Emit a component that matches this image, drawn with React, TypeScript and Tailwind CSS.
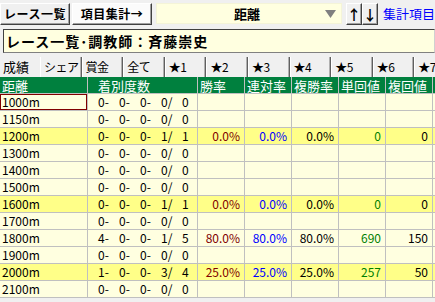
const rows = [
  { d: "1000m", c: ["0-", "0-", "0-", "0/", "0"], hl: false, sel: true, v: ["", "", "", "", ""] },
  { d: "1150m", c: ["0-", "0-", "0-", "0/", "0"], hl: false, v: ["", "", "", "", ""] },
  { d: "1200m", c: ["0-", "0-", "0-", "1/", "1"], hl: true, v: ["0.0%", "0.0%", "0.0%", "0", "0"] },
  { d: "1300m", c: ["0-", "0-", "0-", "0/", "0"], hl: false, v: ["", "", "", "", ""] },
  { d: "1400m", c: ["0-", "0-", "0-", "0/", "0"], hl: false, v: ["", "", "", "", ""] },
  { d: "1500m", c: ["0-", "0-", "0-", "0/", "0"], hl: false, v: ["", "", "", "", ""] },
  { d: "1600m", c: ["0-", "0-", "0-", "1/", "1"], hl: true, v: ["0.0%", "0.0%", "0.0%", "0", "0"] },
  { d: "1700m", c: ["0-", "0-", "0-", "0/", "0"], hl: false, v: ["", "", "", "", ""] },
  { d: "1800m", c: ["4-", "0-", "0-", "1/", "5"], hl: false, v: ["80.0%", "80.0%", "80.0%", "690", "150"] },
  { d: "1900m", c: ["0-", "0-", "0-", "0/", "0"], hl: false, v: ["", "", "", "", ""] },
  { d: "2000m", c: ["1-", "0-", "0-", "3/", "4"], hl: true, v: ["25.0%", "25.0%", "25.0%", "257", "50"] },
  { d: "2100m", c: ["0-", "0-", "0-", "0/", "0"], hl: false, v: ["", "", "", "", ""] },
];

const headers = [
  { t: "距離", pl: "pl-[2px]" },
  { t: "着別度数", pl: "pl-[10px]" },
  { t: "勝率", pl: "pl-[2px]" },
  { t: "連対率", pl: "pl-[2px]" },
  { t: "複勝率", pl: "pl-[2px]" },
  { t: "単回値", pl: "pl-[2px]" },
  { t: "複回値", pl: "pl-[2px]" },
  { t: "", pl: "pl-[2px]" },
];
const valueColors = ["text-[#800000]", "text-[#0000ff]", "text-black", "text-[#008000]", "text-black"];
const tabs = ["シェア", "賞金", "全て", "★1", "★2", "★3", "★4", "★5", "★6", "★7"];

const raised = "border border-t-white border-l-white border-r-[#404040] border-b-[#404040] shadow-[inset_-1px_-1px_0_#a0a0a0]";

export default function App() {
  return (
    <div className="w-[435px] h-[302px] overflow-hidden bg-[#f0f0f0] text-black font-['Noto_Sans_CJK_JP',sans-serif]">
      {/* top bar */}
      <div className="flex items-start h-[29px] pt-[3px] whitespace-nowrap">
        <button className={`w-[70px] h-[22px] shrink-0 bg-[#f0f0f0] text-[12px] tracking-[0.5px] font-bold leading-none ${raised}`}>レース一覧</button>
        <button className={`ml-[2px] w-[80px] h-[22px] shrink-0 bg-[#fbfbfb] text-[12px] tracking-[0.5px] font-bold leading-none ${raised}`}>項目集計→</button>
        <div className="ml-[4px] w-[186px] h-[21px] shrink-0 bg-[#ffffe0] border border-[#f4f4d8] flex items-center">
          <span className="ml-[77px] text-[13px] font-bold leading-none">距離</span>
          <svg className="ml-auto mr-[5px]" width="11" height="8" viewBox="0 0 11 8">
            <polygon points="0,0 11,0 5.5,8" fill="#808080" />
          </svg>
        </div>
        <button className={`ml-[4px] w-[16px] h-[22px] shrink-0 bg-[#f0f0f0] text-[14px] font-bold leading-none ${raised}`}>↑</button>
        <button className={`w-[16px] h-[22px] shrink-0 bg-[#f0f0f0] text-[14px] font-bold leading-none ${raised}`}>↓</button>
        <span className="ml-[5px] mt-[4px] text-[13px] leading-none text-[#0000ff] overflow-hidden">集計項目上</span>
      </div>

      {/* title */}
      <div className="ml-[3px] h-[24px] bg-[#ffffe0] border border-t-[#404040] border-l-[#404040] border-r-[#d0d0d0] border-b-[#808080] flex items-center pl-[2px] text-[14px] tracking-[1px] font-bold leading-none whitespace-nowrap">
        レース一覧･調教師：斉藤崇史
      </div>

      {/* tabs */}
      <div className="flex items-end h-[24px] overflow-hidden whitespace-nowrap">
        <div className="w-[40px] shrink-0 h-[22px] flex items-center pl-[3px] text-[13px] leading-none">成績</div>
        {tabs.map((t) => (
          <div
            key={t}
            className="w-[41.6px] shrink-0 h-[20px] flex items-center pl-[3px] text-[12px] tracking-[-0.5px] leading-none border-l border-l-white border-r border-r-[#606060] shadow-[inset_-1px_0_0_#b0b0b0] bg-[#f0f0f0] overflow-hidden"
          >
            {t}
          </div>
        ))}
      </div>

      {/* grid */}
      <div className="grid grid-cols-[88px_110px_47px_47px_47px_47px_47px_47px] text-[12px] leading-none">
        {headers.map((h, i) => (
          <div key={i} className={`h-[17px] bg-[#00803e] text-white text-[13px] flex items-center ${h.pl} border-r border-b border-[#c0c0c0] whitespace-nowrap overflow-hidden`}>
            {h.t}
          </div>
        ))}
        {rows.map((r) => {
          const bg = r.hl ? "bg-[#ffff88]" : "bg-[#ffffe0]";
          return (
            <div key={r.d} className="contents">
              <div className={`h-[17px] ${bg} flex items-center pl-[2px] border-r border-b border-[#c0c0c0] ${r.sel ? "shadow-[inset_0_0_0_1px_#800000]" : ""}`}>
                {r.d}
              </div>
              <div className={`h-[17px] ${bg} flex items-center pl-[10px] border-r border-b border-[#c0c0c0]`}>
                {r.c.map((x, i) => (
                  <span key={i} className="w-[21px] shrink-0">{x}</span>
                ))}
              </div>
              {r.v.map((x, i) => (
                <div key={i} className={`h-[17px] ${bg} flex items-center justify-end pr-[4px] border-r border-b border-[#c0c0c0] ${valueColors[i]}`}>
                  {x}
                </div>
              ))}
              <div className={`h-[17px] ${bg} border-r border-b border-[#c0c0c0]`} />
            </div>
          );
        })}
      </div>
    </div>
  );
}
